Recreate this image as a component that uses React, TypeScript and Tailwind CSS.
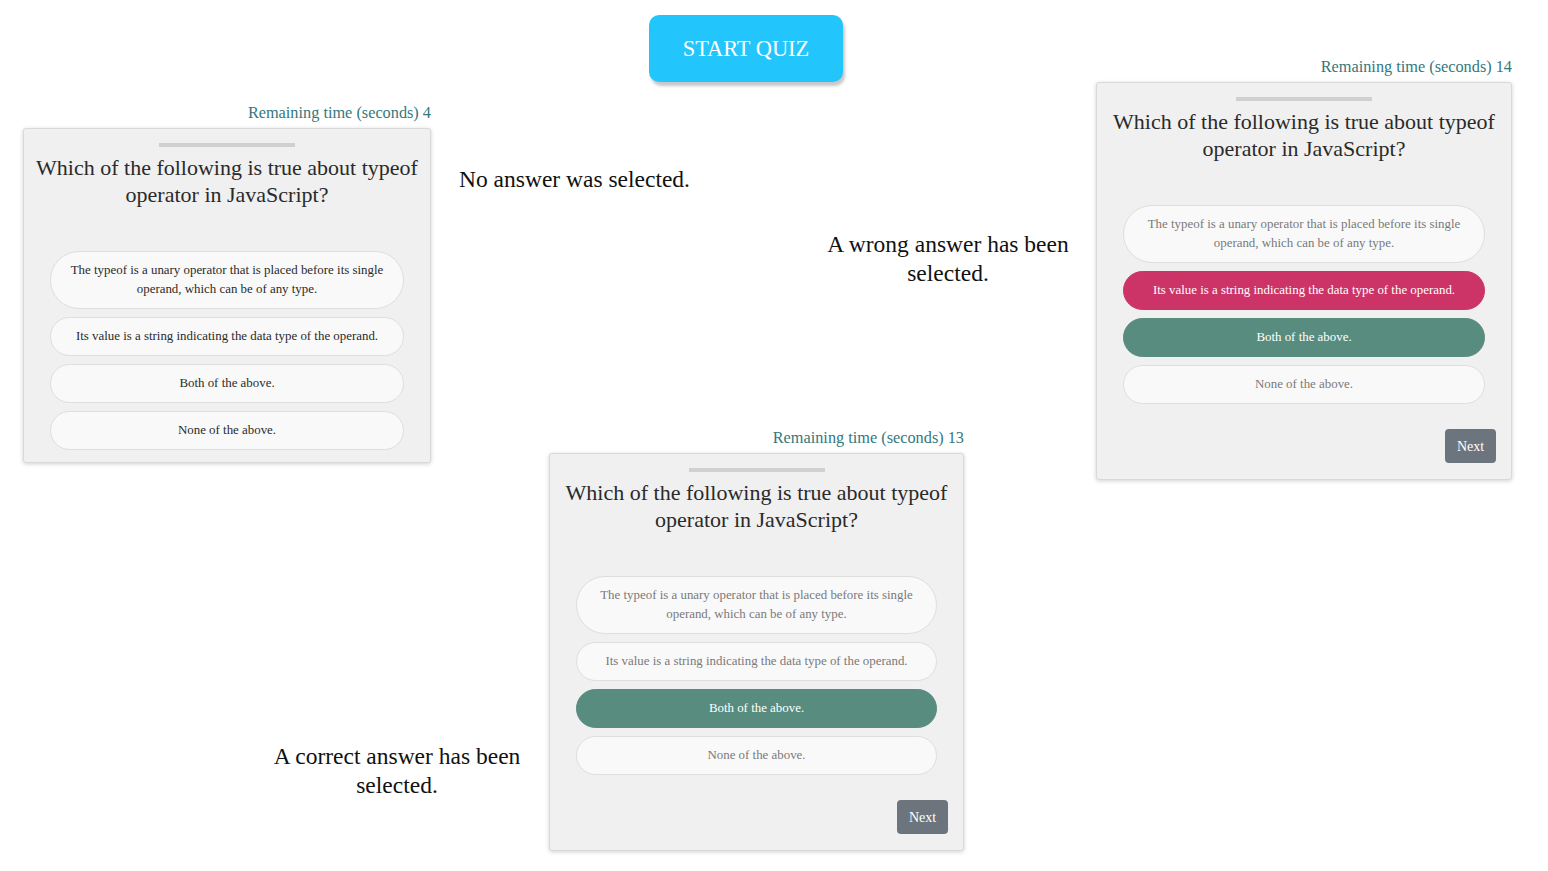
const OPTIONS = [
  'The typeof is a unary operator that is placed before its single operand, which can be of any type.',
  'Its value is a string indicating the data type of the operand.',
  'Both of the above.',
  'None of the above.',
];

function QuizCard({
  seconds,
  picked,
  answered,
  wide,
}: {
  seconds: number;
  picked: number | null;
  answered: boolean;
  wide: string;
}) {
  const correct = 2;

  const optionClass = (i: number) => {
    if (answered && i === correct) return 'bg-[#588c7e] border-[#588c7e] text-white';
    if (answered && i === picked) return 'bg-[#cc3366] border-[#cc3366] text-white';
    if (answered) return 'bg-[#f9f9f9] border-[#dedede] text-[#7a7a7a]';
    return 'bg-[#f9f9f9] border-[#dedede] text-[#2b2b2b]';
  };

  return (
    <div className={wide}>
      <p className="text-right text-[16.3px] leading-[20px] mb-[5px] text-[#34787e]">
        Remaining time (seconds) {seconds}
      </p>
      <div className="bg-[#f0f0f0] border border-[#d9d9d9] rounded-[3px] shadow-[0_1px_4px_rgba(0,0,0,0.18)] px-[12px] pt-[14px] pb-[12px] flex flex-col">
        <div className="w-[136px] h-[4px] bg-[#d0d0d0] mx-auto" />
        <h2 className="mt-[7px] text-center text-[22px] leading-[27px] text-[#2a2a2a]">
          Which of the following is true about typeof operator in JavaScript?
        </h2>
        <div className="mt-[43px] px-[14px] flex flex-col gap-[8px]">
          {OPTIONS.map((o, i) => (
            <div
              key={i}
              className={`rounded-full border px-[18px] py-[9px] text-center text-[12.9px] leading-[19px] ${optionClass(i)}`}
            >
              {o}
            </div>
          ))}
        </div>
        {answered && (
          <button className="self-end mt-[25px] mb-[4px] mr-[3px] bg-[#6c757d] text-white text-[14px] rounded-[4px] w-[51px] h-[34px]">
            Next
          </button>
        )}
      </div>
    </div>
  );
}

export default function App() {
  return (
    <div className="relative w-[1548px] h-[871px] bg-white overflow-hidden font-['Liberation_Serif',serif]">
      <button className="absolute left-[649px] top-[15px] w-[194px] h-[67px] rounded-[10px] bg-[#22c6fd] text-white text-[22.4px] shadow-[2px_4px_3px_rgba(0,0,0,0.22)]">
        START QUIZ
      </button>

      <div className="absolute left-[23px] top-[103px]">
        <QuizCard seconds={4} picked={null} answered={false} wide="w-[408px]" />
      </div>

      <p className="absolute left-[459px] top-[165px] text-[23.5px] leading-[29px] text-[#111]">
        No answer was selected.
      </p>

      <p className="absolute left-[800px] top-[230px] w-[296px] text-center text-[23.5px] leading-[29px] text-[#111]">
        A wrong answer has been
        <br />
        selected.
      </p>

      <div className="absolute left-[1096px] top-[57px]">
        <QuizCard seconds={14} picked={1} answered={true} wide="w-[416px]" />
      </div>

      <div className="absolute left-[549px] top-[428px]">
        <QuizCard seconds={13} picked={2} answered={true} wide="w-[415px]" />
      </div>

      <p className="absolute left-[252px] top-[742px] w-[290px] text-center text-[23.5px] leading-[29px] text-[#111]">
        A correct answer has been
        <br />
        selected.
      </p>
    </div>
  );
}
